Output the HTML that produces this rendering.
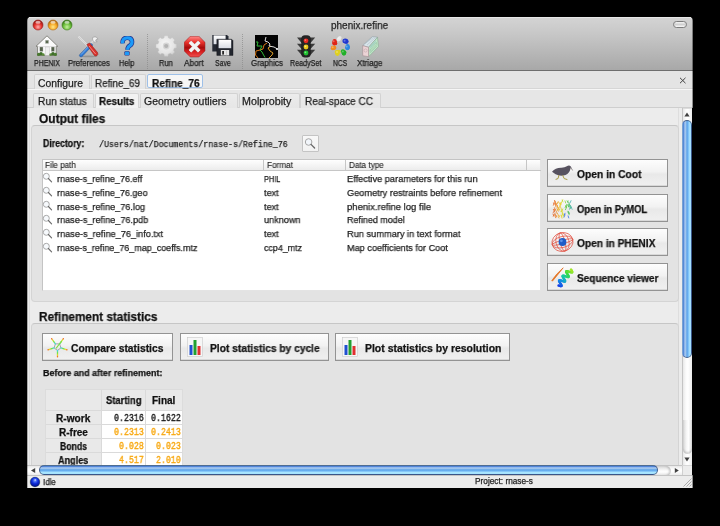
<!DOCTYPE html>
<html><head><meta charset="utf-8"><title>phenix.refine</title>
<style>
html,body{margin:0;padding:0;}
body{width:720px;height:526px;background:#000;position:relative;overflow:hidden;font-family:"Liberation Sans",sans-serif;}
body>div{position:absolute;-webkit-text-stroke:0.25px currentColor;will-change:transform;}
</style></head><body>
<div style="left:27px;top:17px;width:666px;height:53px;background:linear-gradient(#d4d4d4,#c8c8c8 30%,#a8a8a8);border-radius:4px 4px 0 0;"></div>
<div style="left:29px;top:17px;width:662px;height:1px;background:#e6e6e6;"></div>
<div style="left:27px;top:70px;width:666px;height:1px;background:#6e6e6e;"></div>
<svg style="position:absolute;left:32px;top:19px" width="12" height="12" viewBox="0 0 12 12"><defs><radialGradient id="g38" cx="50%" cy="70%" r="60%">
<stop offset="0" stop-color="#ffb0b0"/><stop offset="0.6" stop-color="#e5332d"/><stop offset="1" stop-color="#9a1a15"/></radialGradient></defs>
<circle cx="6" cy="6" r="5" fill="url(#g38)" stroke="#9a1a15" stroke-width="0.6"/>
<ellipse cx="6" cy="3.2" rx="2.6" ry="1.5" fill="#fff" opacity="0.6"/></svg>
<svg style="position:absolute;left:47px;top:19px" width="12" height="12" viewBox="0 0 12 12"><defs><radialGradient id="g53" cx="50%" cy="70%" r="60%">
<stop offset="0" stop-color="#ffe98a"/><stop offset="0.6" stop-color="#f5a623"/><stop offset="1" stop-color="#b06a10"/></radialGradient></defs>
<circle cx="6" cy="6" r="5" fill="url(#g53)" stroke="#b06a10" stroke-width="0.6"/>
<ellipse cx="6" cy="3.2" rx="2.6" ry="1.5" fill="#fff" opacity="0.6"/></svg>
<svg style="position:absolute;left:61px;top:19px" width="12" height="12" viewBox="0 0 12 12"><defs><radialGradient id="g67" cx="50%" cy="70%" r="60%">
<stop offset="0" stop-color="#c8f0a0"/><stop offset="0.6" stop-color="#6bbf3a"/><stop offset="1" stop-color="#3a7a1a"/></radialGradient></defs>
<circle cx="6" cy="6" r="5" fill="url(#g67)" stroke="#3a7a1a" stroke-width="0.6"/>
<ellipse cx="6" cy="3.2" rx="2.6" ry="1.5" fill="#fff" opacity="0.6"/></svg>
<div style="top:20.70px;font-family:'Liberation Sans',sans-serif;font-size:10px;line-height:10px;font-weight:400;color:#262626;white-space:pre;left:331.40px;transform:scaleX(0.9965);transform-origin:0 0;">phenix.refine</div>
<div style="left:673px;top:21px;width:12px;height:5px;border:1px solid #7c7c7c;border-radius:4px;background:linear-gradient(#f4f4f4,#d0d0d0 50%,#fafafa);"></div>
<div style="top:59.29px;font-family:'Liberation Sans',sans-serif;font-size:8.6px;line-height:8.6px;font-weight:400;color:#1c1c1c;white-space:pre;left:34.30px;transform:scaleX(0.8121);transform-origin:0 0;">PHENIX</div>
<div style="top:59.29px;font-family:'Liberation Sans',sans-serif;font-size:8.6px;line-height:8.6px;font-weight:400;color:#1c1c1c;white-space:pre;left:67.70px;transform:scaleX(0.9036);transform-origin:0 0;">Preferences</div>
<div style="top:59.29px;font-family:'Liberation Sans',sans-serif;font-size:8.6px;line-height:8.6px;font-weight:400;color:#1c1c1c;white-space:pre;left:119.30px;transform:scaleX(0.8606);transform-origin:0 0;">Help</div>
<div style="top:59.29px;font-family:'Liberation Sans',sans-serif;font-size:8.6px;line-height:8.6px;font-weight:400;color:#1c1c1c;white-space:pre;left:159.00px;transform:scaleX(0.8758);transform-origin:0 0;">Run</div>
<div style="top:59.29px;font-family:'Liberation Sans',sans-serif;font-size:8.6px;line-height:8.6px;font-weight:400;color:#1c1c1c;white-space:pre;left:184.40px;transform:scaleX(0.9550);transform-origin:0 0;">Abort</div>
<div style="top:59.29px;font-family:'Liberation Sans',sans-serif;font-size:8.6px;line-height:8.6px;font-weight:400;color:#1c1c1c;white-space:pre;left:215.00px;transform:scaleX(0.8077);transform-origin:0 0;">Save</div>
<div style="top:59.29px;font-family:'Liberation Sans',sans-serif;font-size:8.6px;line-height:8.6px;font-weight:400;color:#1c1c1c;white-space:pre;left:250.50px;transform:scaleX(0.9299);transform-origin:0 0;">Graphics</div>
<div style="top:59.29px;font-family:'Liberation Sans',sans-serif;font-size:8.6px;line-height:8.6px;font-weight:400;color:#1c1c1c;white-space:pre;left:289.90px;transform:scaleX(0.8318);transform-origin:0 0;">ReadySet</div>
<div style="top:59.29px;font-family:'Liberation Sans',sans-serif;font-size:8.6px;line-height:8.6px;font-weight:400;color:#1c1c1c;white-space:pre;left:332.80px;transform:scaleX(0.7821);transform-origin:0 0;">NCS</div>
<div style="top:59.29px;font-family:'Liberation Sans',sans-serif;font-size:8.6px;line-height:8.6px;font-weight:400;color:#1c1c1c;white-space:pre;left:357.20px;transform:scaleX(0.9326);transform-origin:0 0;">Xtriage</div>
<div style="left:147px;top:34px;width:1px;height:35px;background:repeating-linear-gradient(#8a8a8a 0 1px,transparent 1px 2px);opacity:.7;"></div>
<div style="left:242px;top:34px;width:1px;height:35px;background:repeating-linear-gradient(#8a8a8a 0 1px,transparent 1px 2px);opacity:.7;"></div>
<svg style="position:absolute;left:35px;top:35px" width="24" height="22" viewBox="0 0 24 22">
<path d="M12 0.8 L1 11.3 L2.6 11.3 L2.6 20.5 L21.2 20.5 L21.2 11.3 L22.8 11.3 Z" fill="#fafafa" stroke="#707068" stroke-width="0.8" stroke-linejoin="round"/>
<path d="M2.6 11.5 H21.2" stroke="#d4d4d4" stroke-width="0.7"/>
<rect x="10.4" y="5.2" width="3.2" height="3.2" fill="#5a6a50" stroke="#c0c0c0" stroke-width="0.4"/>
<rect x="4.8" y="12" width="3.2" height="4.4" fill="#55624c" stroke="#bdbdbd" stroke-width="0.4"/>
<rect x="16.2" y="12" width="3.2" height="4.4" fill="#55624c" stroke="#bdbdbd" stroke-width="0.4"/>
<rect x="10.2" y="12" width="4.2" height="8.5" fill="#f0f0f0" stroke="#c4c4c4" stroke-width="0.5"/>
<circle cx="3.6" cy="19.4" r="1.6" fill="#4a7a30"/><circle cx="6" cy="18.8" r="1.8" fill="#3f6e2a"/><circle cx="8.2" cy="19.6" r="1.4" fill="#5a8a3a"/>
<circle cx="15.8" cy="19.6" r="1.4" fill="#5a8a3a"/><circle cx="18" cy="18.8" r="1.8" fill="#3f6e2a"/><circle cx="20.4" cy="19.4" r="1.6" fill="#4a7a30"/>
</svg>
<svg style="position:absolute;left:76px;top:35px" width="25" height="23" viewBox="0 0 25 23">
<ellipse cx="12.5" cy="21.3" rx="9" ry="0.9" fill="#000" opacity="0.18"/>
<path d="M18.8 3.8 L14 9.5" stroke="#d8d8d8" stroke-width="1.6"/>
<path d="M16.5 2.6 Q20.5 0.6 22 4.2 L20.3 4.3 L19.6 5.8 L21.2 6.6 Q18.6 8.2 16.8 5.6 Z" fill="#f2f2f2" stroke="#8a8a8a" stroke-width="0.5"/>
<path d="M15 8.2 L4 19.2 Q2.6 21 4.2 21.8 Q6 22.2 7 20.6 L16.8 10 Z" fill="#2f7ad6" stroke="#1a4f94" stroke-width="0.5"/>
<path d="M14.6 9.6 L5 19.6" stroke="#8ec0f5" stroke-width="0.8"/>
<line x1="2.5" y1="1.5" x2="12" y2="11" stroke="#f6f6f6" stroke-width="1.4"/>
<line x1="2.5" y1="1.5" x2="12" y2="11" stroke="#9a9a9a" stroke-width="0.4"/>
<path d="M10.8 9.6 L13.6 8 L21.6 17.6 Q22.6 19.6 20.8 20.8 Q19 21.6 18 20 Z" fill="#d8322c" stroke="#8c1a15" stroke-width="0.5"/>
<path d="M13 11 L19.6 19" stroke="#f4a0a0" stroke-width="0.8"/>
</svg>
<svg style="position:absolute;left:119px;top:36px" width="17" height="21" viewBox="0 0 17 21">
<path d="M3.6 7.4 Q3.2 1.8 8.4 1.8 Q13 1.8 13 6 Q13 8.4 10.6 9.8 Q8.6 11 8.6 13.8" fill="none" stroke="#23318a" stroke-width="4.6"/>
<rect x="5.4" y="15.2" width="5.2" height="4.4" rx="1" fill="#23318a"/>
<path d="M3.6 7.4 Q3.2 1.8 8.4 1.8 Q13 1.8 13 6 Q13 8.4 10.6 9.8 Q8.6 11 8.6 13.8" fill="none" stroke="#1c9af8" stroke-width="3.2"/>
<rect x="6" y="15.8" width="4" height="3.2" rx="0.6" fill="#1c9af8"/>
</svg>
<svg style="position:absolute;left:155px;top:35px" width="23" height="23" viewBox="0 0 23 23">
<defs><radialGradient id="gr" cx="45%" cy="40%" r="65%"><stop offset="0" stop-color="#f6f6f6"/><stop offset=".7" stop-color="#e4e4e4"/><stop offset="1" stop-color="#cdcdcd"/></radialGradient></defs>
<polygon points="9.04,2.88 9.44,0.75 12.96,0.75 13.36,2.88 15.41,3.73 17.20,2.51 19.69,5.00 18.47,6.79 19.32,8.84 21.45,9.24 21.45,12.76 19.32,13.16 18.47,15.21 19.69,17.00 17.20,19.49 15.41,18.27 13.36,19.12 12.96,21.25 9.44,21.25 9.04,19.12 6.99,18.27 5.20,19.49 2.71,17.00 3.93,15.21 3.08,13.16 0.95,12.76 0.95,9.24 3.08,8.84 3.93,6.79 2.71,5.00 5.20,2.51 6.99,3.73" fill="url(#gr)" stroke="#c4c4c4" stroke-width="0.4" stroke-linejoin="round"/>
<circle cx="11.2" cy="11" r="3.4" fill="#d6d6d6"/>
<circle cx="11.2" cy="11" r="2.1" fill="#b3b3b3"/>
</svg>
<svg style="position:absolute;left:184px;top:36px" width="22" height="22" viewBox="0 0 22 22">
<defs><linearGradient id="ab" x1="0" y1="0" x2="0" y2="1"><stop offset="0" stop-color="#ff8a8a"/><stop offset=".3" stop-color="#e8302a"/><stop offset=".55" stop-color="#a80c0c"/><stop offset=".75" stop-color="#d82020"/><stop offset="1" stop-color="#f05050"/></linearGradient></defs>
<polygon points="20.95,14.89 14.89,20.95 6.31,20.95 0.25,14.89 0.25,6.31 6.31,0.25 14.89,0.25 20.95,6.31" fill="url(#ab)" stroke="#901010" stroke-width="0.5"/>
<path d="M6 6 L15.2 15.2 M15.2 6 L6 15.2" stroke="#c8c8c8" stroke-width="3.8"/>
<path d="M6 6 L15.2 15.2 M15.2 6 L6 15.2" stroke="#f4f4f4" stroke-width="3"/>
</svg>
<svg style="position:absolute;left:212px;top:35px" width="22" height="21" viewBox="0 0 22 21">
<defs><linearGradient id="fl" x1="0" y1="0" x2="0" y2="1"><stop offset="0" stop-color="#ffffff"/><stop offset="1" stop-color="#d8dce4"/></linearGradient></defs>
<path d="M0.3 0 H15 L16.5 1.5 V16.4 H0.3 Z" fill="#252a34"/>
<rect x="1.6" y="0.4" width="12" height="8.8" fill="url(#fl)"/>
<path d="M4.8 4.2 H19.6 L21 5.6 V20.4 H4.8 Z" fill="#22262e" stroke="#0e1014" stroke-width="0.4"/>
<rect x="6.6" y="4.8" width="12.6" height="8.4" fill="url(#fl)"/>
<rect x="8.8" y="15" width="8.4" height="5.4" fill="#e6e6e6"/>
<rect x="10.2" y="16" width="1.8" height="3.6" fill="#2a2a2a"/>
<rect x="14" y="15.5" width="0.6" height="4.8" fill="#b8b8b8"/>
</svg>
<svg style="position:absolute;left:255px;top:35px" width="23" height="23" viewBox="0 0 23 23">
<rect x="0" y="0" width="23" height="23" fill="#030303"/>
<path d="M12 8 L9 10 L8 14 L5 15 L1 16 L0.5 20 L3 23" fill="none" stroke="#d87818" stroke-width="1"/>
<path d="M1 7 L3 7 L2 11 L7 11 L5 15 L7 17 L8 19 L10 22.5" fill="none" stroke="#30b838" stroke-width="1"/>
<path d="M16 11 L13 13 L15 16 L18 18 L17 20 L14 23" fill="none" stroke="#e0a028" stroke-width="1"/>
<path d="M11 2 L10 6 L13 7 L15 9 L14 11 L19 12 L22.5 14" fill="none" stroke="#f0f0f0" stroke-width="0.9"/>
<circle cx="22" cy="14" r="1" fill="#fff"/>
</svg>
<svg style="position:absolute;left:296px;top:35px" width="20" height="23" viewBox="0 0 20 23">
<path d="M6 2.6 H1 L6 8.4 Z" fill="#3a3a3a"/><path d="M14 2.6 H19.2 L14 8.4 Z" fill="#3a3a3a"/><path d="M6 8.8 H1 L6 14.6 Z" fill="#3a3a3a"/><path d="M14 8.8 H19.2 L14 14.6 Z" fill="#3a3a3a"/><path d="M6 14.8 H1 L6 20.6 Z" fill="#3a3a3a"/><path d="M14 14.8 H19.2 L14 20.6 Z" fill="#3a3a3a"/>
<rect x="5.6" y="0.6" width="8.8" height="21.6" rx="3" fill="#262626" stroke="#111" stroke-width="0.4"/>
<circle cx="10" cy="5.8" r="2.4" fill="#e8281e"/>
<circle cx="10" cy="12" r="2.4" fill="#e8c818"/>
<circle cx="10" cy="18" r="2.4" fill="#20c030"/>
<circle cx="9.4" cy="5.1" r="0.9" fill="#ff9a90" opacity=".7"/>
<circle cx="9.4" cy="11.3" r="0.9" fill="#fff6a0" opacity=".7"/>
<circle cx="9.4" cy="17.3" r="0.9" fill="#a0ffa0" opacity=".7"/>
</svg>
<svg style="position:absolute;left:328px;top:34px" width="24" height="24" viewBox="0 0 24 24"><circle cx="10.87" cy="4.91" r="1.82" fill="#e8e8e8"/><circle cx="11.19" cy="5.05" r="1.82" fill="#e8e8e8"/><circle cx="11.80" cy="3.76" r="1.82" fill="#e8e8e8"/><circle cx="10.33" cy="5.61" r="1.82" fill="#e8e8e8"/><circle cx="10.90" cy="4.00" r="1" fill="#fff" opacity=".3"/><circle cx="16.62" cy="6.96" r="2.24" fill="#2038d0"/><circle cx="18.39" cy="7.53" r="2.24" fill="#2038d0"/><circle cx="18.01" cy="7.54" r="2.24" fill="#2038d0"/><circle cx="17.53" cy="6.76" r="2.24" fill="#2038d0"/><circle cx="16.60" cy="6.80" r="1" fill="#fff" opacity=".3"/><circle cx="19.52" cy="14.08" r="2.10" fill="#2a88e0"/><circle cx="19.26" cy="13.78" r="2.10" fill="#2a88e0"/><circle cx="19.61" cy="12.15" r="2.10" fill="#2a88e0"/><circle cx="19.82" cy="13.42" r="2.10" fill="#2a88e0"/><circle cx="18.60" cy="12.40" r="1" fill="#fff" opacity=".3"/><circle cx="14.92" cy="17.27" r="2.10" fill="#20b028"/><circle cx="16.28" cy="18.33" r="2.10" fill="#20b028"/><circle cx="15.93" cy="19.31" r="2.10" fill="#20b028"/><circle cx="15.91" cy="19.41" r="2.10" fill="#20b028"/><circle cx="14.80" cy="17.60" r="1" fill="#fff" opacity=".3"/><circle cx="9.35" cy="19.52" r="2.10" fill="#e0d020"/><circle cx="9.47" cy="19.85" r="2.10" fill="#e0d020"/><circle cx="10.51" cy="17.83" r="2.10" fill="#e0d020"/><circle cx="8.73" cy="18.12" r="2.10" fill="#e0d020"/><circle cx="9.00" cy="18.00" r="1" fill="#fff" opacity=".3"/><circle cx="6.32" cy="13.85" r="2.10" fill="#f08c20"/><circle cx="5.50" cy="13.52" r="2.10" fill="#f08c20"/><circle cx="5.22" cy="13.73" r="2.10" fill="#f08c20"/><circle cx="4.84" cy="14.20" r="2.10" fill="#f08c20"/><circle cx="4.60" cy="13.20" r="1" fill="#fff" opacity=".3"/><circle cx="6.40" cy="8.97" r="2.17" fill="#e02418"/><circle cx="6.64" cy="9.03" r="2.17" fill="#e02418"/><circle cx="7.06" cy="9.18" r="2.17" fill="#e02418"/><circle cx="6.61" cy="7.19" r="2.17" fill="#e02418"/><circle cx="5.60" cy="7.20" r="1" fill="#fff" opacity=".3"/></svg>
<svg style="position:absolute;left:361px;top:35px" width="19" height="23" viewBox="0 0 19 23">
<path d="M1.7 10.6 L11.3 1.7 L16.5 2.2 L7.6 12.3 Z" fill="#d8e4ea" stroke="#8c9ca4" stroke-width="0.6" stroke-linejoin="round"/>
<path d="M7.6 12.3 L16.5 2.2 L17.5 11.6 L7.6 21.7 Z" fill="#bfe6c8" stroke="#8aa890" stroke-width="0.6" stroke-linejoin="round"/>
<path d="M1.7 10.6 L7.6 12.3 L7.6 21.7 L1.7 20.7 Z" fill="#ecd4d6" stroke="#a08c8e" stroke-width="0.6" stroke-linejoin="round"/>
<path d="M9 15 L15.5 7.5 L15.8 9.5 L9.2 16.5 Z M9.2 18 L16 10.8" fill="none" stroke="#8ab898" stroke-width="0.5"/>
<path d="M9.2 13.5 L14.5 7.5 L15.2 5 L9.2 11.5 Z" fill="#98c8c0" opacity=".8"/>
<path d="M4 8.5 L12.5 2.6 M6 10 L14 3" stroke="#a8b8c0" stroke-width="0.5"/>
<circle cx="4.6" cy="15.5" r="1.6" fill="none" stroke="#b8a0a4" stroke-width="0.5"/>
</svg>
<div style="left:27px;top:71px;width:666px;height:17px;background:#e4e4e4;"></div>
<div style="left:27px;top:88px;width:666px;height:1px;background:#d6d6d6;"></div>
<div style="left:27px;top:89px;width:666px;height:1px;background:#f6f6f6;"></div>
<div style="left:34px;top:74px;width:54px;height:14px;background:linear-gradient(#ececec,#e6e6e6);border:1px solid #d2d2d2;border-bottom:none;border-radius:2px 2px 0 0;"></div>
<div style="left:91px;top:74px;width:53px;height:14px;background:linear-gradient(#ececec,#e6e6e6);border:1px solid #d2d2d2;border-bottom:none;border-radius:2px 2px 0 0;"></div>
<div style="left:147px;top:74px;width:54px;height:12px;background:#f6f6f6;border:1px solid #9ec0e8;border-radius:2px;"></div>
<div style="top:78.95px;font-family:'Liberation Sans',sans-serif;font-size:10.3px;line-height:10.3px;font-weight:400;color:#1e1e1e;white-space:pre;left:37.70px;transform:scaleX(1.0062);transform-origin:0 0;">Configure</div>
<div style="top:78.95px;font-family:'Liberation Sans',sans-serif;font-size:10.3px;line-height:10.3px;font-weight:400;color:#1e1e1e;white-space:pre;left:95.40px;transform:scaleX(0.9573);transform-origin:0 0;">Refine_69</div>
<div style="top:78.95px;font-family:'Liberation Sans',sans-serif;font-size:10.3px;line-height:10.3px;font-weight:700;color:#111;white-space:pre;left:151.80px;transform:scaleX(0.9771);transform-origin:0 0;">Refine_76</div>
<svg style="position:absolute;left:679px;top:77px" width="8" height="7" viewBox="0 0 8 7"><path d="M1 0.8 L6.5 6.2 M6.5 0.8 L1 6.2" stroke="#444" stroke-width="1"/></svg>
<div style="left:27px;top:90px;width:666px;height:17px;background:#e6e6e6;"></div>
<div style="left:27px;top:107px;width:666px;height:1px;background:#cecece;"></div>
<div style="left:33px;top:93px;width:59px;height:14px;background:linear-gradient(#ececec,#e6e6e6);border:1px solid #d2d2d2;border-bottom:none;border-radius:2px 2px 0 0;"></div>
<div style="left:95px;top:93px;width:42px;height:14px;background:#f2f2f2;border:1px solid #d4d4d4;border-bottom:none;border-radius:2px 2px 0 0;"></div>
<div style="left:140px;top:93px;width:96px;height:14px;background:linear-gradient(#ececec,#e6e6e6);border:1px solid #d2d2d2;border-bottom:none;border-radius:2px 2px 0 0;"></div>
<div style="left:239px;top:93px;width:59px;height:14px;background:linear-gradient(#ececec,#e6e6e6);border:1px solid #d2d2d2;border-bottom:none;border-radius:2px 2px 0 0;"></div>
<div style="left:300px;top:93px;width:79px;height:14px;background:linear-gradient(#ececec,#e6e6e6);border:1px solid #d2d2d2;border-bottom:none;border-radius:2px 2px 0 0;"></div>
<div style="top:97.05px;font-family:'Liberation Sans',sans-serif;font-size:10.3px;line-height:10.3px;font-weight:400;color:#1e1e1e;white-space:pre;left:37.50px;transform:scaleX(0.9904);transform-origin:0 0;">Run status</div>
<div style="top:97.05px;font-family:'Liberation Sans',sans-serif;font-size:10.3px;line-height:10.3px;font-weight:700;color:#111;white-space:pre;left:99.40px;transform:scaleX(0.9501);transform-origin:0 0;">Results</div>
<div style="top:97.05px;font-family:'Liberation Sans',sans-serif;font-size:10.3px;line-height:10.3px;font-weight:400;color:#1e1e1e;white-space:pre;left:144.40px;transform:scaleX(1.0147);transform-origin:0 0;">Geometry outliers</div>
<div style="top:97.05px;font-family:'Liberation Sans',sans-serif;font-size:10.3px;line-height:10.3px;font-weight:400;color:#1e1e1e;white-space:pre;left:242.40px;transform:scaleX(1.0404);transform-origin:0 0;">Molprobity</div>
<div style="top:97.05px;font-family:'Liberation Sans',sans-serif;font-size:10.3px;line-height:10.3px;font-weight:400;color:#1e1e1e;white-space:pre;left:304.50px;transform:scaleX(0.9733);transform-origin:0 0;">Real-space CC</div>
<div style="left:27px;top:108px;width:655px;height:357px;background:#ececec;"></div>
<div style="left:29px;top:108px;width:1px;height:357px;background:#e0e0e0;"></div>
<div style="left:678px;top:108px;width:1px;height:357px;background:#dedede;"></div>
<div style="top:113.30px;font-family:'Liberation Sans',sans-serif;font-size:12px;line-height:12px;font-weight:700;color:#111;white-space:pre;left:38.60px;transform:scaleX(0.9942);transform-origin:0 0;">Output files</div>
<div style="left:31px;top:125px;width:648px;height:177px;background:#e3e3e3;border:1px solid #d4d4d4;border-top-color:#c6c6c6;border-radius:4px;box-sizing:border-box;"></div>
<div style="top:139.20px;font-family:'Liberation Sans',sans-serif;font-size:10px;line-height:10px;font-weight:700;color:#111;white-space:pre;left:42.80px;transform:scaleX(0.8741);transform-origin:0 0;">Directory:</div>
<div style="top:141.16px;font-family:'Liberation Mono',monospace;font-size:8.6px;line-height:8.6px;font-weight:400;color:#222;white-space:pre;left:98.80px;transform:scaleX(0.9627);transform-origin:0 0;">/Users/nat/Documents/rnase-s/Refine_76</div>
<div style="left:302px;top:135px;width:17px;height:17px;background:linear-gradient(#f8f8f8,#f2f2f2);border:1px solid #c4c4c4;border-radius:1px;box-sizing:border-box;"></div>
<svg style="position:absolute;left:303px;top:136px" width="15" height="15" viewBox="0 0 15 15"><circle cx="5.6" cy="6" r="3.3" fill="#f2f6fb" stroke="#a4a4a4" stroke-width="1"/><path d="M8 8.4 L11.6 12" stroke="#666" stroke-width="1.3" stroke-linecap="round"/></svg>
<div style="left:42px;top:159px;width:499px;height:132px;background:#fff;border:1px solid #c4c4c4;border-right-color:#e4e4e4;border-bottom-color:#e4e4e4;box-sizing:border-box;"></div>
<div style="left:43px;top:160px;width:497px;height:10px;background:linear-gradient(#fefefe,#ececec);"></div>
<div style="left:42px;top:170px;width:499px;height:1px;background:#c6c6c6;"></div>
<div style="left:263px;top:160px;width:1px;height:10px;background:#c6c6c6;"></div>
<div style="left:345px;top:160px;width:1px;height:10px;background:#c6c6c6;"></div>
<div style="left:526px;top:160px;width:1px;height:10px;background:#c6c6c6;"></div>
<div style="top:160.59px;font-family:'Liberation Sans',sans-serif;font-size:8.6px;line-height:8.6px;font-weight:400;color:#1a1a1a;white-space:pre;left:45.10px;transform:scaleX(0.9343);transform-origin:0 0;-webkit-text-stroke:0.1px currentColor;">File path</div>
<div style="top:160.59px;font-family:'Liberation Sans',sans-serif;font-size:8.6px;line-height:8.6px;font-weight:400;color:#1a1a1a;white-space:pre;left:266.70px;transform:scaleX(0.9523);transform-origin:0 0;-webkit-text-stroke:0.1px currentColor;">Format</div>
<div style="top:160.59px;font-family:'Liberation Sans',sans-serif;font-size:8.6px;line-height:8.6px;font-weight:400;color:#1a1a1a;white-space:pre;left:349.00px;transform:scaleX(0.9458);transform-origin:0 0;-webkit-text-stroke:0.1px currentColor;">Data type</div>
<svg style="position:absolute;left:42px;top:172.1px" width="12" height="11" viewBox="0 0 12 11"><circle cx="4.3" cy="4.3" r="3" fill="#f6f9fc" stroke="#a0a0a0" stroke-width="0.9"/><path d="M6.4 6.5 L9.6 9.8" stroke="#6a6a6a" stroke-width="1.1" stroke-linecap="round"/></svg>
<div style="top:173.74px;font-family:'Liberation Sans',sans-serif;font-size:9.6px;line-height:9.6px;font-weight:400;color:#1c1c1c;white-space:pre;left:56.90px;transform:scaleX(0.9436);transform-origin:0 0;">rnase-s_refine_76.eff</div>
<div style="top:173.74px;font-family:'Liberation Sans',sans-serif;font-size:9.6px;line-height:9.6px;font-weight:400;color:#1c1c1c;white-space:pre;left:264.10px;transform:scaleX(0.7639);transform-origin:0 0;">PHIL</div>
<div style="top:173.74px;font-family:'Liberation Sans',sans-serif;font-size:9.6px;line-height:9.6px;font-weight:400;color:#1c1c1c;white-space:pre;left:346.70px;transform:scaleX(0.9619);transform-origin:0 0;">Effective parameters for this run</div>
<svg style="position:absolute;left:42px;top:186.0px" width="12" height="11" viewBox="0 0 12 11"><circle cx="4.3" cy="4.3" r="3" fill="#f6f9fc" stroke="#a0a0a0" stroke-width="0.9"/><path d="M6.4 6.5 L9.6 9.8" stroke="#6a6a6a" stroke-width="1.1" stroke-linecap="round"/></svg>
<div style="top:187.64px;font-family:'Liberation Sans',sans-serif;font-size:9.6px;line-height:9.6px;font-weight:400;color:#1c1c1c;white-space:pre;left:56.90px;transform:scaleX(0.9428);transform-origin:0 0;">rnase-s_refine_76.geo</div>
<div style="top:187.64px;font-family:'Liberation Sans',sans-serif;font-size:9.6px;line-height:9.6px;font-weight:400;color:#1c1c1c;white-space:pre;left:264.10px;transform:scaleX(0.9495);transform-origin:0 0;">text</div>
<div style="top:187.64px;font-family:'Liberation Sans',sans-serif;font-size:9.6px;line-height:9.6px;font-weight:400;color:#1c1c1c;white-space:pre;left:346.70px;transform:scaleX(0.9567);transform-origin:0 0;">Geometry restraints before refinement</div>
<svg style="position:absolute;left:42px;top:199.9px" width="12" height="11" viewBox="0 0 12 11"><circle cx="4.3" cy="4.3" r="3" fill="#f6f9fc" stroke="#a0a0a0" stroke-width="0.9"/><path d="M6.4 6.5 L9.6 9.8" stroke="#6a6a6a" stroke-width="1.1" stroke-linecap="round"/></svg>
<div style="top:201.54px;font-family:'Liberation Sans',sans-serif;font-size:9.6px;line-height:9.6px;font-weight:400;color:#1c1c1c;white-space:pre;left:56.90px;transform:scaleX(0.9485);transform-origin:0 0;">rnase-s_refine_76.log</div>
<div style="top:201.54px;font-family:'Liberation Sans',sans-serif;font-size:9.6px;line-height:9.6px;font-weight:400;color:#1c1c1c;white-space:pre;left:264.10px;transform:scaleX(0.9495);transform-origin:0 0;">text</div>
<div style="top:201.54px;font-family:'Liberation Sans',sans-serif;font-size:9.6px;line-height:9.6px;font-weight:400;color:#1c1c1c;white-space:pre;left:346.70px;transform:scaleX(0.9847);transform-origin:0 0;">phenix.refine log file</div>
<svg style="position:absolute;left:42px;top:213.8px" width="12" height="11" viewBox="0 0 12 11"><circle cx="4.3" cy="4.3" r="3" fill="#f6f9fc" stroke="#a0a0a0" stroke-width="0.9"/><path d="M6.4 6.5 L9.6 9.8" stroke="#6a6a6a" stroke-width="1.1" stroke-linecap="round"/></svg>
<div style="top:215.44px;font-family:'Liberation Sans',sans-serif;font-size:9.6px;line-height:9.6px;font-weight:400;color:#1c1c1c;white-space:pre;left:56.90px;transform:scaleX(0.9502);transform-origin:0 0;">rnase-s_refine_76.pdb</div>
<div style="top:215.44px;font-family:'Liberation Sans',sans-serif;font-size:9.6px;line-height:9.6px;font-weight:400;color:#1c1c1c;white-space:pre;left:264.10px;transform:scaleX(0.9523);transform-origin:0 0;">unknown</div>
<div style="top:215.44px;font-family:'Liberation Sans',sans-serif;font-size:9.6px;line-height:9.6px;font-weight:400;color:#1c1c1c;white-space:pre;left:346.70px;transform:scaleX(0.9315);transform-origin:0 0;">Refined model</div>
<svg style="position:absolute;left:42px;top:227.7px" width="12" height="11" viewBox="0 0 12 11"><circle cx="4.3" cy="4.3" r="3" fill="#f6f9fc" stroke="#a0a0a0" stroke-width="0.9"/><path d="M6.4 6.5 L9.6 9.8" stroke="#6a6a6a" stroke-width="1.1" stroke-linecap="round"/></svg>
<div style="top:229.34px;font-family:'Liberation Sans',sans-serif;font-size:9.6px;line-height:9.6px;font-weight:400;color:#1c1c1c;white-space:pre;left:56.90px;transform:scaleX(0.9563);transform-origin:0 0;">rnase-s_refine_76_info.txt</div>
<div style="top:229.34px;font-family:'Liberation Sans',sans-serif;font-size:9.6px;line-height:9.6px;font-weight:400;color:#1c1c1c;white-space:pre;left:264.10px;transform:scaleX(0.9495);transform-origin:0 0;">text</div>
<div style="top:229.34px;font-family:'Liberation Sans',sans-serif;font-size:9.6px;line-height:9.6px;font-weight:400;color:#1c1c1c;white-space:pre;left:346.70px;transform:scaleX(0.9623);transform-origin:0 0;">Run summary in text format</div>
<svg style="position:absolute;left:42px;top:241.6px" width="12" height="11" viewBox="0 0 12 11"><circle cx="4.3" cy="4.3" r="3" fill="#f6f9fc" stroke="#a0a0a0" stroke-width="0.9"/><path d="M6.4 6.5 L9.6 9.8" stroke="#6a6a6a" stroke-width="1.1" stroke-linecap="round"/></svg>
<div style="top:243.24px;font-family:'Liberation Sans',sans-serif;font-size:9.6px;line-height:9.6px;font-weight:400;color:#1c1c1c;white-space:pre;left:56.90px;transform:scaleX(0.9348);transform-origin:0 0;">rnase-s_refine_76_map_coeffs.mtz</div>
<div style="top:243.24px;font-family:'Liberation Sans',sans-serif;font-size:9.6px;line-height:9.6px;font-weight:400;color:#1c1c1c;white-space:pre;left:264.10px;transform:scaleX(0.9259);transform-origin:0 0;">ccp4_mtz</div>
<div style="top:243.24px;font-family:'Liberation Sans',sans-serif;font-size:9.6px;line-height:9.6px;font-weight:400;color:#1c1c1c;white-space:pre;left:346.70px;transform:scaleX(0.9523);transform-origin:0 0;">Map coefficients for Coot</div>
<div style="left:547px;top:159px;width:121px;height:28px;background:linear-gradient(#fdfdfd,#f2f2f2 45%,#e9e9e9 55%,#f0f0f0);border:1px solid #939393;box-shadow:inset 0 -1px 0 #d8d8d8;box-sizing:border-box;"></div>
<div style="top:170.34px;font-family:'Liberation Sans',sans-serif;font-size:10.3px;line-height:10.3px;font-weight:700;color:#151515;white-space:pre;left:577.10px;transform:scaleX(0.9969);transform-origin:0 0;">Open in Coot</div>
<div style="left:547px;top:194px;width:121px;height:28px;background:linear-gradient(#fdfdfd,#f2f2f2 45%,#e9e9e9 55%,#f0f0f0);border:1px solid #939393;box-shadow:inset 0 -1px 0 #d8d8d8;box-sizing:border-box;"></div>
<div style="top:205.34px;font-family:'Liberation Sans',sans-serif;font-size:10.3px;line-height:10.3px;font-weight:700;color:#151515;white-space:pre;left:577.10px;transform:scaleX(0.9166);transform-origin:0 0;">Open in PyMOL</div>
<div style="left:547px;top:228px;width:121px;height:28px;background:linear-gradient(#fdfdfd,#f2f2f2 45%,#e9e9e9 55%,#f0f0f0);border:1px solid #939393;box-shadow:inset 0 -1px 0 #d8d8d8;box-sizing:border-box;"></div>
<div style="top:239.34px;font-family:'Liberation Sans',sans-serif;font-size:10.3px;line-height:10.3px;font-weight:700;color:#151515;white-space:pre;left:577.10px;transform:scaleX(0.9855);transform-origin:0 0;">Open in PHENIX</div>
<div style="left:547px;top:263px;width:121px;height:28px;background:linear-gradient(#fdfdfd,#f2f2f2 45%,#e9e9e9 55%,#f0f0f0);border:1px solid #939393;box-shadow:inset 0 -1px 0 #d8d8d8;box-sizing:border-box;"></div>
<div style="top:274.35px;font-family:'Liberation Sans',sans-serif;font-size:10.3px;line-height:10.3px;font-weight:700;color:#151515;white-space:pre;left:577.10px;transform:scaleX(0.9754);transform-origin:0 0;">Sequence viewer</div>
<svg style="position:absolute;left:551px;top:164px" width="23" height="18" viewBox="0 0 23 18">
<path d="M1 7.8 Q4.5 3.6 10.5 3.8 Q13.8 3.6 15.8 2.2 Q18.4 0.4 19.8 2.6 L22.2 7 L19.4 4.8 Q18.6 9.4 14.5 11 Q9 12.6 4.6 10.2 Z" fill="#57525f"/>
<path d="M19.4 3.2 L22.2 7 L19.6 5 Z" fill="#f0ece0"/>
<path d="M8 11 L7 14.6 L4.6 15.4 M11.6 11.2 L13.2 14.6 L16.4 15.6" stroke="#a89a40" stroke-width="1" fill="none"/>
</svg>
<svg style="position:absolute;left:551px;top:197px" width="23" height="22" viewBox="0 0 23 22"><line x1="7.5" y1="4.6" x2="6.6" y2="6.5" stroke="#edb028" stroke-width="0.9" opacity=".85"/><line x1="17.4" y1="3.6" x2="16.5" y2="5.5" stroke="#50be68" stroke-width="0.9" opacity=".85"/><line x1="11.1" y1="2.6" x2="12.0" y2="5.3" stroke="#d4d92a" stroke-width="0.9" opacity=".85"/><line x1="5.8" y1="11.4" x2="7.5" y2="14.6" stroke="#ee9828" stroke-width="0.9" opacity=".85"/><line x1="3.5" y1="5.8" x2="2.2" y2="8.7" stroke="#e77328" stroke-width="0.9" opacity=".85"/><line x1="2.2" y1="12.0" x2="4.0" y2="15.5" stroke="#e35f28" stroke-width="0.9" opacity=".85"/><line x1="1.9" y1="16.6" x2="2.8" y2="19.3" stroke="#e25a28" stroke-width="0.9" opacity=".85"/><line x1="11.8" y1="11.7" x2="10.3" y2="15.0" stroke="#c2d62d" stroke-width="0.9" opacity=".85"/><line x1="4.6" y1="11.9" x2="3.6" y2="14.0" stroke="#ea8528" stroke-width="0.9" opacity=".85"/><line x1="2.9" y1="14.1" x2="2.1" y2="16.0" stroke="#e56a28" stroke-width="0.9" opacity=".85"/><line x1="5.1" y1="13.6" x2="6.2" y2="16.9" stroke="#ec8d28" stroke-width="0.9" opacity=".85"/><line x1="10.3" y1="17.7" x2="11.1" y2="20.2" stroke="#e6d928" stroke-width="0.9" opacity=".85"/><line x1="16.9" y1="13.9" x2="17.9" y2="15.8" stroke="#53c15a" stroke-width="0.9" opacity=".85"/><line x1="7.0" y1="10.4" x2="8.1" y2="13.7" stroke="#eeaa28" stroke-width="0.9" opacity=".85"/><line x1="6.8" y1="18.7" x2="8.1" y2="21.4" stroke="#eea628" stroke-width="0.9" opacity=".85"/><line x1="4.3" y1="7.8" x2="5.2" y2="10.5" stroke="#e98028" stroke-width="0.9" opacity=".85"/><line x1="20.2" y1="3.3" x2="18.9" y2="6.2" stroke="#40aeb3" stroke-width="0.9" opacity=".85"/><line x1="18.5" y1="7.3" x2="17.4" y2="9.8" stroke="#4ab885" stroke-width="0.9" opacity=".85"/><line x1="10.9" y1="15.5" x2="12.6" y2="18.8" stroke="#dada29" stroke-width="0.9" opacity=".85"/><line x1="19.9" y1="10.1" x2="19.0" y2="12.0" stroke="#42b0aa" stroke-width="0.9" opacity=".85"/><line x1="15.6" y1="7.3" x2="14.0" y2="10.9" stroke="#5dc83b" stroke-width="0.9" opacity=".85"/><line x1="17.4" y1="6.8" x2="18.6" y2="10.4" stroke="#50be69" stroke-width="0.9" opacity=".85"/><line x1="7.9" y1="18.0" x2="8.7" y2="20.2" stroke="#ecb728" stroke-width="0.9" opacity=".85"/><line x1="3.3" y1="3.0" x2="4.1" y2="5.1" stroke="#e67128" stroke-width="0.9" opacity=".85"/><line x1="6.0" y1="8.6" x2="6.6" y2="10.7" stroke="#ee9a28" stroke-width="0.9" opacity=".85"/><line x1="10.0" y1="11.3" x2="11.6" y2="14.6" stroke="#e7d428" stroke-width="0.9" opacity=".85"/><line x1="18.3" y1="6.7" x2="19.5" y2="10.5" stroke="#4bb97f" stroke-width="0.9" opacity=".85"/><line x1="14.7" y1="8.5" x2="15.7" y2="10.5" stroke="#77cc37" stroke-width="0.9" opacity=".85"/><line x1="4.5" y1="5.9" x2="5.4" y2="7.7" stroke="#ea8328" stroke-width="0.9" opacity=".85"/><line x1="17.6" y1="5.1" x2="18.3" y2="7.0" stroke="#4fbd6d" stroke-width="0.9" opacity=".85"/><line x1="9.4" y1="8.3" x2="8.3" y2="10.7" stroke="#e8cb28" stroke-width="0.9" opacity=".85"/><line x1="3.5" y1="16.6" x2="2.1" y2="19.6" stroke="#e77328" stroke-width="0.9" opacity=".85"/><line x1="15.8" y1="9.8" x2="14.3" y2="13.0" stroke="#59c73d" stroke-width="0.9" opacity=".85"/><line x1="8.8" y1="8.8" x2="10.2" y2="11.4" stroke="#e9c428" stroke-width="0.9" opacity=".85"/><line x1="9.0" y1="5.2" x2="10.3" y2="7.8" stroke="#e9c628" stroke-width="0.9" opacity=".85"/><line x1="3.2" y1="12.2" x2="4.1" y2="14.0" stroke="#e66e28" stroke-width="0.9" opacity=".85"/><line x1="4.0" y1="3.7" x2="5.0" y2="6.8" stroke="#e87b28" stroke-width="0.9" opacity=".85"/><line x1="2.4" y1="5.5" x2="3.1" y2="7.7" stroke="#e36228" stroke-width="0.9" opacity=".85"/><line x1="6.0" y1="7.9" x2="7.0" y2="10.7" stroke="#ef9b28" stroke-width="0.9" opacity=".85"/><line x1="3.3" y1="10.3" x2="4.2" y2="13.1" stroke="#e67028" stroke-width="0.9" opacity=".85"/><line x1="7.2" y1="4.4" x2="6.1" y2="6.9" stroke="#edad28" stroke-width="0.9" opacity=".85"/><line x1="6.3" y1="16.1" x2="7.7" y2="18.8" stroke="#ef9f28" stroke-width="0.9" opacity=".85"/><line x1="5.1" y1="18.2" x2="5.8" y2="20.4" stroke="#ec8d28" stroke-width="0.9" opacity=".85"/><line x1="11.9" y1="2.5" x2="10.8" y2="4.8" stroke="#c1d62d" stroke-width="0.9" opacity=".85"/><line x1="13.9" y1="3.5" x2="14.8" y2="6.4" stroke="#8ccf34" stroke-width="0.9" opacity=".85"/><line x1="19.2" y1="8.0" x2="20.6" y2="10.8" stroke="#46b497" stroke-width="0.9" opacity=".85"/><line x1="16.6" y1="7.6" x2="18.0" y2="10.5" stroke="#55c352" stroke-width="0.9" opacity=".85"/><line x1="16.8" y1="14.9" x2="18.4" y2="18.1" stroke="#54c257" stroke-width="0.9" opacity=".85"/><line x1="17.4" y1="14.6" x2="18.5" y2="16.7" stroke="#50be67" stroke-width="0.9" opacity=".85"/><line x1="10.9" y1="14.4" x2="12.5" y2="17.6" stroke="#dcda29" stroke-width="0.9" opacity=".85"/><line x1="10.4" y1="5.3" x2="8.8" y2="8.9" stroke="#e6db28" stroke-width="0.9" opacity=".85"/><line x1="9.9" y1="17.9" x2="11.2" y2="21.6" stroke="#e7d428" stroke-width="0.9" opacity=".85"/><line x1="8.3" y1="5.7" x2="9.6" y2="8.4" stroke="#ebbc28" stroke-width="0.9" opacity=".85"/><line x1="7.8" y1="10.2" x2="6.2" y2="13.6" stroke="#ecb428" stroke-width="0.9" opacity=".85"/><line x1="10.6" y1="13.1" x2="9.7" y2="15.1" stroke="#e3db28" stroke-width="0.9" opacity=".85"/><line x1="14.2" y1="17.5" x2="12.8" y2="20.6" stroke="#2a6ae0" stroke-width="0.9" opacity=".85"/><line x1="10.6" y1="5.0" x2="9.5" y2="7.5" stroke="#e4db28" stroke-width="0.9" opacity=".85"/><line x1="17.0" y1="18.5" x2="17.9" y2="21.3" stroke="#2a6ae0" stroke-width="0.9" opacity=".85"/><line x1="15.9" y1="3.4" x2="16.9" y2="5.5" stroke="#59c73f" stroke-width="0.9" opacity=".85"/><line x1="3.5" y1="4.6" x2="4.7" y2="8.0" stroke="#e77428" stroke-width="0.9" opacity=".85"/><line x1="3.9" y1="16.1" x2="5.0" y2="19.2" stroke="#e87a28" stroke-width="0.9" opacity=".85"/><line x1="8.0" y1="11.3" x2="8.9" y2="13.1" stroke="#ebb828" stroke-width="0.9" opacity=".85"/><line x1="17.0" y1="14.3" x2="18.4" y2="17.1" stroke="#52c05c" stroke-width="0.9" opacity=".85"/><line x1="19.7" y1="9.4" x2="21.3" y2="12.6" stroke="#43b1a4" stroke-width="0.9" opacity=".85"/><line x1="5.2" y1="6.3" x2="6.2" y2="9.1" stroke="#ec8e28" stroke-width="0.9" opacity=".85"/><line x1="16.3" y1="7.5" x2="15.1" y2="10.1" stroke="#57c549" stroke-width="0.9" opacity=".85"/><line x1="3.6" y1="17.5" x2="4.8" y2="21.1" stroke="#e77528" stroke-width="0.9" opacity=".85"/><line x1="14.2" y1="15.9" x2="13.1" y2="18.4" stroke="#2a6ae0" stroke-width="0.9" opacity=".85"/><line x1="19.4" y1="10.5" x2="18.4" y2="12.6" stroke="#45b39c" stroke-width="0.9" opacity=".85"/><line x1="11.2" y1="16.8" x2="12.7" y2="19.7" stroke="#d3d92a" stroke-width="0.9" opacity=".85"/></svg>
<svg style="position:absolute;left:551px;top:231px" width="23" height="22" viewBox="0 0 23 22">
<g transform="rotate(-15 11.5 11)" fill="none" stroke="#e04030" stroke-width="0.7" opacity=".9">
<ellipse cx="11.5" cy="11" rx="10.6" ry="9.4"/>
<ellipse cx="11.5" cy="11" rx="6.5" ry="9.4"/>
<ellipse cx="11.5" cy="11" rx="2.5" ry="9.4"/>
<ellipse cx="11.5" cy="11" rx="10.6" ry="5.5"/>
<ellipse cx="11.5" cy="11" rx="10.6" ry="1.8"/>
</g>
<circle cx="11.5" cy="11" r="3.9" fill="#1e5cc8"/>
<circle cx="10.4" cy="9.8" r="1.4" fill="#6aa0f0" opacity=".8"/>
</svg>
<svg style="position:absolute;left:550px;top:266px" width="24" height="22" viewBox="0 0 24 22">
<path d="M1.8 14.6 Q6 8 13.2 1.8 Q8 8.5 2.4 15.2 Z" fill="#e87a20" stroke="#e06818" stroke-width="0.7"/>
<line x1="8.50" y1="19.50" x2="9.88" y2="19.94" stroke="#143ce6" stroke-width="2.4" stroke-linecap="round"/><line x1="9.88" y1="19.94" x2="10.95" y2="20.13" stroke="#1444e6" stroke-width="2.4" stroke-linecap="round"/><line x1="10.95" y1="20.13" x2="11.48" y2="19.90" stroke="#144ce6" stroke-width="2.4" stroke-linecap="round"/><line x1="11.48" y1="19.90" x2="11.41" y2="19.19" stroke="#1454e6" stroke-width="2.4" stroke-linecap="round"/><line x1="11.41" y1="19.19" x2="10.85" y2="18.11" stroke="#145ce6" stroke-width="2.4" stroke-linecap="round"/><line x1="10.85" y1="18.11" x2="10.05" y2="16.85" stroke="#1464e6" stroke-width="2.4" stroke-linecap="round"/><line x1="10.05" y1="16.85" x2="9.36" y2="15.66" stroke="#146ce6" stroke-width="2.4" stroke-linecap="round"/><line x1="9.36" y1="15.66" x2="9.05" y2="14.78" stroke="#1474e6" stroke-width="2.4" stroke-linecap="round"/><line x1="9.05" y1="14.78" x2="9.32" y2="14.34" stroke="#147ce6" stroke-width="2.4" stroke-linecap="round"/><line x1="9.32" y1="14.34" x2="10.18" y2="14.37" stroke="#1484e6" stroke-width="2.4" stroke-linecap="round"/><line x1="10.18" y1="14.37" x2="11.46" y2="14.73" stroke="#148ce6" stroke-width="2.4" stroke-linecap="round"/><line x1="11.46" y1="14.73" x2="12.88" y2="15.19" stroke="#1492e0" stroke-width="2.4" stroke-linecap="round"/><line x1="12.88" y1="15.19" x2="14.12" y2="15.52" stroke="#1498da" stroke-width="2.4" stroke-linecap="round"/><line x1="14.12" y1="15.52" x2="14.90" y2="15.48" stroke="#149ed4" stroke-width="2.4" stroke-linecap="round"/><line x1="14.90" y1="15.48" x2="15.08" y2="14.98" stroke="#14a4ce" stroke-width="2.4" stroke-linecap="round"/><line x1="15.08" y1="14.98" x2="14.70" y2="14.04" stroke="#14aac8" stroke-width="2.4" stroke-linecap="round"/><line x1="14.70" y1="14.04" x2="13.97" y2="12.83" stroke="#14b0c2" stroke-width="2.4" stroke-linecap="round"/><line x1="13.97" y1="12.83" x2="13.19" y2="11.57" stroke="#14b6bc" stroke-width="2.4" stroke-linecap="round"/><line x1="13.19" y1="11.57" x2="12.69" y2="10.54" stroke="#14bcb6" stroke-width="2.4" stroke-linecap="round"/><line x1="12.69" y1="10.54" x2="12.70" y2="9.90" stroke="#14c2b0" stroke-width="2.4" stroke-linecap="round"/><line x1="12.70" y1="9.90" x2="13.32" y2="9.74" stroke="#14c8aa" stroke-width="2.4" stroke-linecap="round"/><line x1="13.32" y1="9.74" x2="14.44" y2="9.97" stroke="#18ca9f" stroke-width="2.4" stroke-linecap="round"/><line x1="14.44" y1="9.97" x2="15.85" y2="10.43" stroke="#1ccc93" stroke-width="2.4" stroke-linecap="round"/><line x1="15.85" y1="10.43" x2="17.20" y2="10.84" stroke="#1fce89" stroke-width="2.4" stroke-linecap="round"/><line x1="17.20" y1="10.84" x2="18.21" y2="10.98" stroke="#24d07e" stroke-width="2.4" stroke-linecap="round"/><line x1="18.21" y1="10.98" x2="18.65" y2="10.68" stroke="#28d273" stroke-width="2.4" stroke-linecap="round"/><line x1="18.65" y1="10.68" x2="18.50" y2="9.92" stroke="#2cd467" stroke-width="2.4" stroke-linecap="round"/><line x1="18.50" y1="9.92" x2="17.88" y2="8.79" stroke="#30d65c" stroke-width="2.4" stroke-linecap="round"/><line x1="17.88" y1="8.79" x2="17.08" y2="7.53" stroke="#33d852" stroke-width="2.4" stroke-linecap="round"/><line x1="17.08" y1="7.53" x2="16.43" y2="6.37" stroke="#38da47" stroke-width="2.4" stroke-linecap="round"/><line x1="16.43" y1="6.37" x2="16.20" y2="5.54" stroke="#3cdc3c" stroke-width="2.4" stroke-linecap="round"/><line x1="16.20" y1="5.54" x2="16.55" y2="5.18" stroke="#47dd3a" stroke-width="2.4" stroke-linecap="round"/><line x1="16.55" y1="5.18" x2="17.48" y2="5.26" stroke="#52de38" stroke-width="2.4" stroke-linecap="round"/><line x1="17.48" y1="5.26" x2="18.80" y2="5.65" stroke="#5cdf36" stroke-width="2.4" stroke-linecap="round"/><line x1="18.80" y1="5.65" x2="20.22" y2="6.11" stroke="#68e034" stroke-width="2.4" stroke-linecap="round"/><line x1="20.22" y1="6.11" x2="21.41" y2="6.39" stroke="#73e132" stroke-width="2.4" stroke-linecap="round"/><line x1="21.41" y1="6.39" x2="22.11" y2="6.30" stroke="#7ee230" stroke-width="2.4" stroke-linecap="round"/><line x1="22.11" y1="6.30" x2="22.20" y2="5.73" stroke="#89e32e" stroke-width="2.4" stroke-linecap="round"/><line x1="22.20" y1="5.73" x2="21.76" y2="4.74" stroke="#94e42c" stroke-width="2.4" stroke-linecap="round"/><line x1="21.76" y1="4.74" x2="21.00" y2="3.50" stroke="#9fe52a" stroke-width="2.4" stroke-linecap="round"/></svg>
<div style="top:310.60px;font-family:'Liberation Sans',sans-serif;font-size:12px;line-height:12px;font-weight:700;color:#111;white-space:pre;left:38.80px;transform:scaleX(0.9808);transform-origin:0 0;">Refinement statistics</div>
<div style="left:31px;top:323px;width:648px;height:160px;background:#e3e3e3;border:1px solid #d4d4d4;border-top-color:#c6c6c6;border-radius:4px;box-sizing:border-box;"></div>
<div style="left:42px;top:333px;width:131px;height:28px;background:linear-gradient(#fdfdfd,#f2f2f2 45%,#e9e9e9 55%,#f0f0f0);border:1px solid #939393;box-shadow:inset 0 -1px 0 #d8d8d8;box-sizing:border-box;"></div>
<div style="left:180px;top:333px;width:149px;height:28px;background:linear-gradient(#fdfdfd,#f2f2f2 45%,#e9e9e9 55%,#f0f0f0);border:1px solid #939393;box-shadow:inset 0 -1px 0 #d8d8d8;box-sizing:border-box;"></div>
<div style="left:335px;top:333px;width:175px;height:28px;background:linear-gradient(#fdfdfd,#f2f2f2 45%,#e9e9e9 55%,#f0f0f0);border:1px solid #939393;box-shadow:inset 0 -1px 0 #d8d8d8;box-sizing:border-box;"></div>
<div style="top:344.14px;font-family:'Liberation Sans',sans-serif;font-size:10.3px;line-height:10.3px;font-weight:700;color:#151515;white-space:pre;left:71.30px;transform:scaleX(1.0032);transform-origin:0 0;">Compare statistics</div>
<div style="top:344.14px;font-family:'Liberation Sans',sans-serif;font-size:10.3px;line-height:10.3px;font-weight:700;color:#151515;white-space:pre;left:209.50px;transform:scaleX(0.9934);transform-origin:0 0;">Plot statistics by cycle</div>
<div style="top:344.14px;font-family:'Liberation Sans',sans-serif;font-size:10.3px;line-height:10.3px;font-weight:700;color:#151515;white-space:pre;left:364.70px;transform:scaleX(1.0144);transform-origin:0 0;">Plot statistics by resolution</div>
<svg style="position:absolute;left:47px;top:336px" width="22" height="22" viewBox="0 0 22 22"><polygon points="10.50,14.40 7.08,11.91 8.38,7.89 12.62,7.89 13.92,11.91" fill="none" stroke="#909090" stroke-width="0.8"/><defs><linearGradient id="sp0" gradientUnits="userSpaceOnUse" x1="10.50" y1="14.40" x2="10.50" y2="20.80"><stop offset="0" stop-color="#40d8e8"/><stop offset=".4" stop-color="#70e040"/><stop offset=".75" stop-color="#e8e030"/><stop offset="1" stop-color="#f06020"/></linearGradient></defs><line x1="10.50" y1="14.40" x2="10.50" y2="20.80" stroke="url(#sp0)" stroke-width="1.3" stroke-linecap="round"/><defs><linearGradient id="sp1" gradientUnits="userSpaceOnUse" x1="7.08" y1="11.91" x2="0.99" y2="13.89"><stop offset="0" stop-color="#40d8e8"/><stop offset=".4" stop-color="#70e040"/><stop offset=".75" stop-color="#e8e030"/><stop offset="1" stop-color="#f06020"/></linearGradient></defs><line x1="7.08" y1="11.91" x2="0.99" y2="13.89" stroke="url(#sp1)" stroke-width="1.3" stroke-linecap="round"/><defs><linearGradient id="sp2" gradientUnits="userSpaceOnUse" x1="8.38" y1="7.89" x2="4.62" y2="2.71"><stop offset="0" stop-color="#40d8e8"/><stop offset=".4" stop-color="#70e040"/><stop offset=".75" stop-color="#e8e030"/><stop offset="1" stop-color="#f06020"/></linearGradient></defs><line x1="8.38" y1="7.89" x2="4.62" y2="2.71" stroke="url(#sp2)" stroke-width="1.3" stroke-linecap="round"/><defs><linearGradient id="sp3" gradientUnits="userSpaceOnUse" x1="12.62" y1="7.89" x2="16.38" y2="2.71"><stop offset="0" stop-color="#40d8e8"/><stop offset=".4" stop-color="#70e040"/><stop offset=".75" stop-color="#e8e030"/><stop offset="1" stop-color="#f06020"/></linearGradient></defs><line x1="12.62" y1="7.89" x2="16.38" y2="2.71" stroke="url(#sp3)" stroke-width="1.3" stroke-linecap="round"/><defs><linearGradient id="sp4" gradientUnits="userSpaceOnUse" x1="13.92" y1="11.91" x2="20.01" y2="13.89"><stop offset="0" stop-color="#40d8e8"/><stop offset=".4" stop-color="#70e040"/><stop offset=".75" stop-color="#e8e030"/><stop offset="1" stop-color="#f06020"/></linearGradient></defs><line x1="13.92" y1="11.91" x2="20.01" y2="13.89" stroke="url(#sp4)" stroke-width="1.3" stroke-linecap="round"/><line x1="9.0" y1="12.3" x2="14.5" y2="5.300000000000001" stroke="#80e040" stroke-width="1.1"/></svg>
<svg style="position:absolute;left:187px;top:337px" width="16" height="20" viewBox="0 0 16 20">
<rect x="0.5" y="0.5" width="15" height="19" fill="#f6f6f6" stroke="#c8c8c8" stroke-width="0.6"/>
<rect x="2.5" y="8" width="3" height="10" fill="#2050d0"/>
<rect x="6.5" y="3" width="3" height="15" fill="#20a030"/>
<rect x="10.5" y="9" width="3" height="9" fill="#e03030"/>
</svg>
<svg style="position:absolute;left:342px;top:337px" width="16" height="20" viewBox="0 0 16 20">
<rect x="0.5" y="0.5" width="15" height="19" fill="#f6f6f6" stroke="#c8c8c8" stroke-width="0.6"/>
<rect x="2.5" y="8" width="3" height="10" fill="#2050d0"/>
<rect x="6.5" y="3" width="3" height="15" fill="#20a030"/>
<rect x="10.5" y="9" width="3" height="9" fill="#e03030"/>
</svg>
<div style="top:368.65px;font-family:'Liberation Sans',sans-serif;font-size:9px;line-height:9px;font-weight:700;color:#111;white-space:pre;left:43.00px;transform:scaleX(0.9906);transform-origin:0 0;">Before and after refinement:</div>
<div style="left:45px;top:389px;width:138px;height:76px;background:#e9e9e9;"></div>
<div style="left:102px;top:410px;width:81px;height:55px;background:#fff;"></div>
<div style="left:46px;top:410px;width:137px;height:1px;background:#dadada;"></div>
<div style="left:46px;top:424px;width:137px;height:1px;background:#dadada;"></div>
<div style="left:46px;top:438px;width:137px;height:1px;background:#dadada;"></div>
<div style="left:46px;top:452px;width:137px;height:1px;background:#dadada;"></div>
<div style="left:101px;top:390px;width:1px;height:75px;background:#dadada;"></div>
<div style="left:145px;top:390px;width:1px;height:75px;background:#dadada;"></div>
<div style="left:45px;top:389px;width:1px;height:76px;background:#dcdcdc;"></div>
<div style="left:45px;top:389px;width:138px;height:1px;background:#dcdcdc;"></div>
<div style="left:182px;top:389px;width:1px;height:76px;background:#dcdcdc;"></div>
<div style="top:396.00px;font-family:'Liberation Sans',sans-serif;font-size:10px;line-height:10px;font-weight:700;color:#111;white-space:pre;left:106.25px;transform:scaleX(0.9397);transform-origin:0 0;">Starting</div>
<div style="top:396.00px;font-family:'Liberation Sans',sans-serif;font-size:10px;line-height:10px;font-weight:700;color:#111;white-space:pre;left:152.22px;">Final</div>
<div style="top:413.70px;font-family:'Liberation Sans',sans-serif;font-size:10px;line-height:10px;font-weight:700;color:#111;white-space:pre;left:56.45px;transform:scaleX(1.0108);transform-origin:0 0;">R-work</div>
<div style="top:414.00px;font-family:'Liberation Mono',monospace;font-size:10px;line-height:10px;font-weight:400;color:#1a1a1a;white-space:pre;left:114.10px;transform:scaleX(0.8277);transform-origin:0 0;-webkit-text-stroke:0.4px currentColor;">0.2316</div>
<div style="top:414.00px;font-family:'Liberation Mono',monospace;font-size:10px;line-height:10px;font-weight:400;color:#1a1a1a;white-space:pre;left:150.80px;transform:scaleX(0.8277);transform-origin:0 0;-webkit-text-stroke:0.4px currentColor;">0.1622</div>
<div style="top:427.80px;font-family:'Liberation Sans',sans-serif;font-size:10px;line-height:10px;font-weight:700;color:#111;white-space:pre;left:59.15px;">R-free</div>
<div style="top:428.10px;font-family:'Liberation Mono',monospace;font-size:10px;line-height:10px;font-weight:400;color:#f8a810;white-space:pre;left:114.10px;transform:scaleX(0.8277);transform-origin:0 0;-webkit-text-stroke:0.4px currentColor;">0.2313</div>
<div style="top:428.10px;font-family:'Liberation Mono',monospace;font-size:10px;line-height:10px;font-weight:400;color:#f8a810;white-space:pre;left:150.80px;transform:scaleX(0.8277);transform-origin:0 0;-webkit-text-stroke:0.4px currentColor;">0.2413</div>
<div style="top:441.90px;font-family:'Liberation Sans',sans-serif;font-size:10px;line-height:10px;font-weight:700;color:#111;white-space:pre;left:60.10px;transform:scaleX(0.8685);transform-origin:0 0;">Bonds</div>
<div style="top:442.20px;font-family:'Liberation Mono',monospace;font-size:10px;line-height:10px;font-weight:400;color:#f8a810;white-space:pre;left:119.10px;transform:scaleX(0.8266);transform-origin:0 0;-webkit-text-stroke:0.4px currentColor;">0.028</div>
<div style="top:442.20px;font-family:'Liberation Mono',monospace;font-size:10px;line-height:10px;font-weight:400;color:#f8a810;white-space:pre;left:155.80px;transform:scaleX(0.8266);transform-origin:0 0;-webkit-text-stroke:0.4px currentColor;">0.023</div>
<div style="top:456.00px;font-family:'Liberation Sans',sans-serif;font-size:10px;line-height:10px;font-weight:700;color:#111;white-space:pre;left:58.45px;transform:scaleX(0.9089);transform-origin:0 0;">Angles</div>
<div style="top:456.30px;font-family:'Liberation Mono',monospace;font-size:10px;line-height:10px;font-weight:400;color:#f8a810;white-space:pre;left:119.10px;transform:scaleX(0.8266);transform-origin:0 0;-webkit-text-stroke:0.4px currentColor;">4.517</div>
<div style="top:456.30px;font-family:'Liberation Mono',monospace;font-size:10px;line-height:10px;font-weight:400;color:#f8a810;white-space:pre;left:155.80px;transform:scaleX(0.8266);transform-origin:0 0;-webkit-text-stroke:0.4px currentColor;">2.010</div>
<div style="left:682px;top:108px;width:10px;height:357px;background:linear-gradient(90deg,#c4c4c4 0 1px,#e8e8e8 1px,#fbfbfb 40%,#ffffff 60%,#ececec);"></div>
<div style="left:683px;top:108px;width:9px;height:1px;background:#dcdcdc;"></div>
<svg style="position:absolute;left:684px;top:112px" width="6" height="5" viewBox="0 0 6 5"><path d="M3 0.6 L5.6 4.6 H0.4 Z" fill="#404040"/></svg>
<svg style="position:absolute;left:684px;top:457px" width="6" height="5" viewBox="0 0 6 5"><path d="M3 4.4 L5.6 0.4 H0.4 Z" fill="#404040"/></svg>
<div style="left:683px;top:420px;width:9px;height:34px;border-radius:0 0 5px 5px;background:linear-gradient(90deg,#d8d8d8,#f6f6f6 40%,#ffffff 60%,#dcdcdc);box-shadow:inset 0 -2px 2px rgba(0,0,0,.16);"></div>
<div style="left:683px;top:453px;width:9px;height:1px;background:transparent;"></div>
<div style="left:682px;top:119.5px;width:10px;height:238px;border-radius:5px;box-sizing:border-box;border:1px solid rgba(50,70,110,.75);border-left-color:rgba(90,120,180,.6);background:linear-gradient(90deg,#3a74d0,#a8c8f0 25%,#9cc4ee 35%,#58a0e8 50%,#78bcf6 65%,#a8e4ff 85%,#a0dcff);"></div>
<div style="left:27px;top:465px;width:655px;height:10px;background:linear-gradient(#c4c4c4 0 1px,#e8e8e8 1px,#fbfbfb 40%,#ffffff 60%,#ececec);"></div>
<svg style="position:absolute;left:30px;top:467px" width="7" height="7" viewBox="0 0 7 7"><path d="M1 3.5 L5.2 1 V6 Z" fill="#404040"/></svg>
<svg style="position:absolute;left:673px;top:467px" width="7" height="7" viewBox="0 0 7 7"><path d="M5.8 3.5 L1.8 1 V6 Z" fill="#404040"/></svg>
<div style="left:630px;top:465.5px;width:41px;height:9.5px;border-radius:0 5px 5px 0;background:linear-gradient(#d8d8d8,#f6f6f6 40%,#ffffff 60%,#dcdcdc);box-shadow:inset -2px 0 2px rgba(0,0,0,.16);"></div>
<div style="left:38.5px;top:465px;width:619px;height:10px;border-radius:5px;box-sizing:border-box;border:1px solid rgba(50,70,110,.75);background:linear-gradient(#2f6ad0,#a6c8f0 22%,#9cc4ee 32%,#58a0e8 50%,#74b8f4 62%,#aae6ff 82%,#a2e2ff);"></div>
<div style="left:682px;top:465px;width:10px;height:10px;background:#ececec;border-left:1px solid #d0d0d0;border-top:1px solid #d8d8d8;box-sizing:border-box;"></div>
<div style="left:27px;top:475px;width:666px;height:13px;background:#ececec;"></div>
<div style="left:27px;top:475px;width:666px;height:1px;background:#c4c4c4;"></div>
<svg style="position:absolute;left:29px;top:476px" width="12" height="12" viewBox="0 0 12 12"><defs><radialGradient id="ball" cx="50%" cy="35%" r="60%"><stop offset="0" stop-color="#7aa0ff"/><stop offset=".5" stop-color="#1030e0"/><stop offset="1" stop-color="#001090"/></radialGradient></defs>
<circle cx="6" cy="6" r="4.9" fill="url(#ball)" stroke="#305020" stroke-width="0.3"/><circle cx="6.3" cy="4" r="0.9" fill="#c0d0ff" opacity=".8"/></svg>
<div style="top:478.39px;font-family:'Liberation Sans',sans-serif;font-size:8.6px;line-height:8.6px;font-weight:400;color:#222;white-space:pre;left:43.10px;transform:scaleX(0.9235);transform-origin:0 0;">Idle</div>
<div style="top:477.83px;font-family:'Liberation Sans',sans-serif;font-size:8.2px;line-height:8.2px;font-weight:400;color:#222;white-space:pre;left:474.60px;transform:scaleX(1.0116);transform-origin:0 0;">Project: rnase-s</div>
<svg style="position:absolute;left:682px;top:477px" width="10" height="10" viewBox="0 0 10 10"><path d="M9.5 1.5 L1.5 9.5 M9.5 4.5 L4.5 9.5 M9.5 7.5 L7.5 9.5" stroke="#9a9a9a" stroke-width="0.8"/></svg>
<div style="left:27px;top:18px;width:1px;height:470px;background:rgba(0,0,0,.28);"></div>
<div style="left:692px;top:18px;width:1px;height:470px;background:rgba(0,0,0,.38);"></div>
</body></html>
